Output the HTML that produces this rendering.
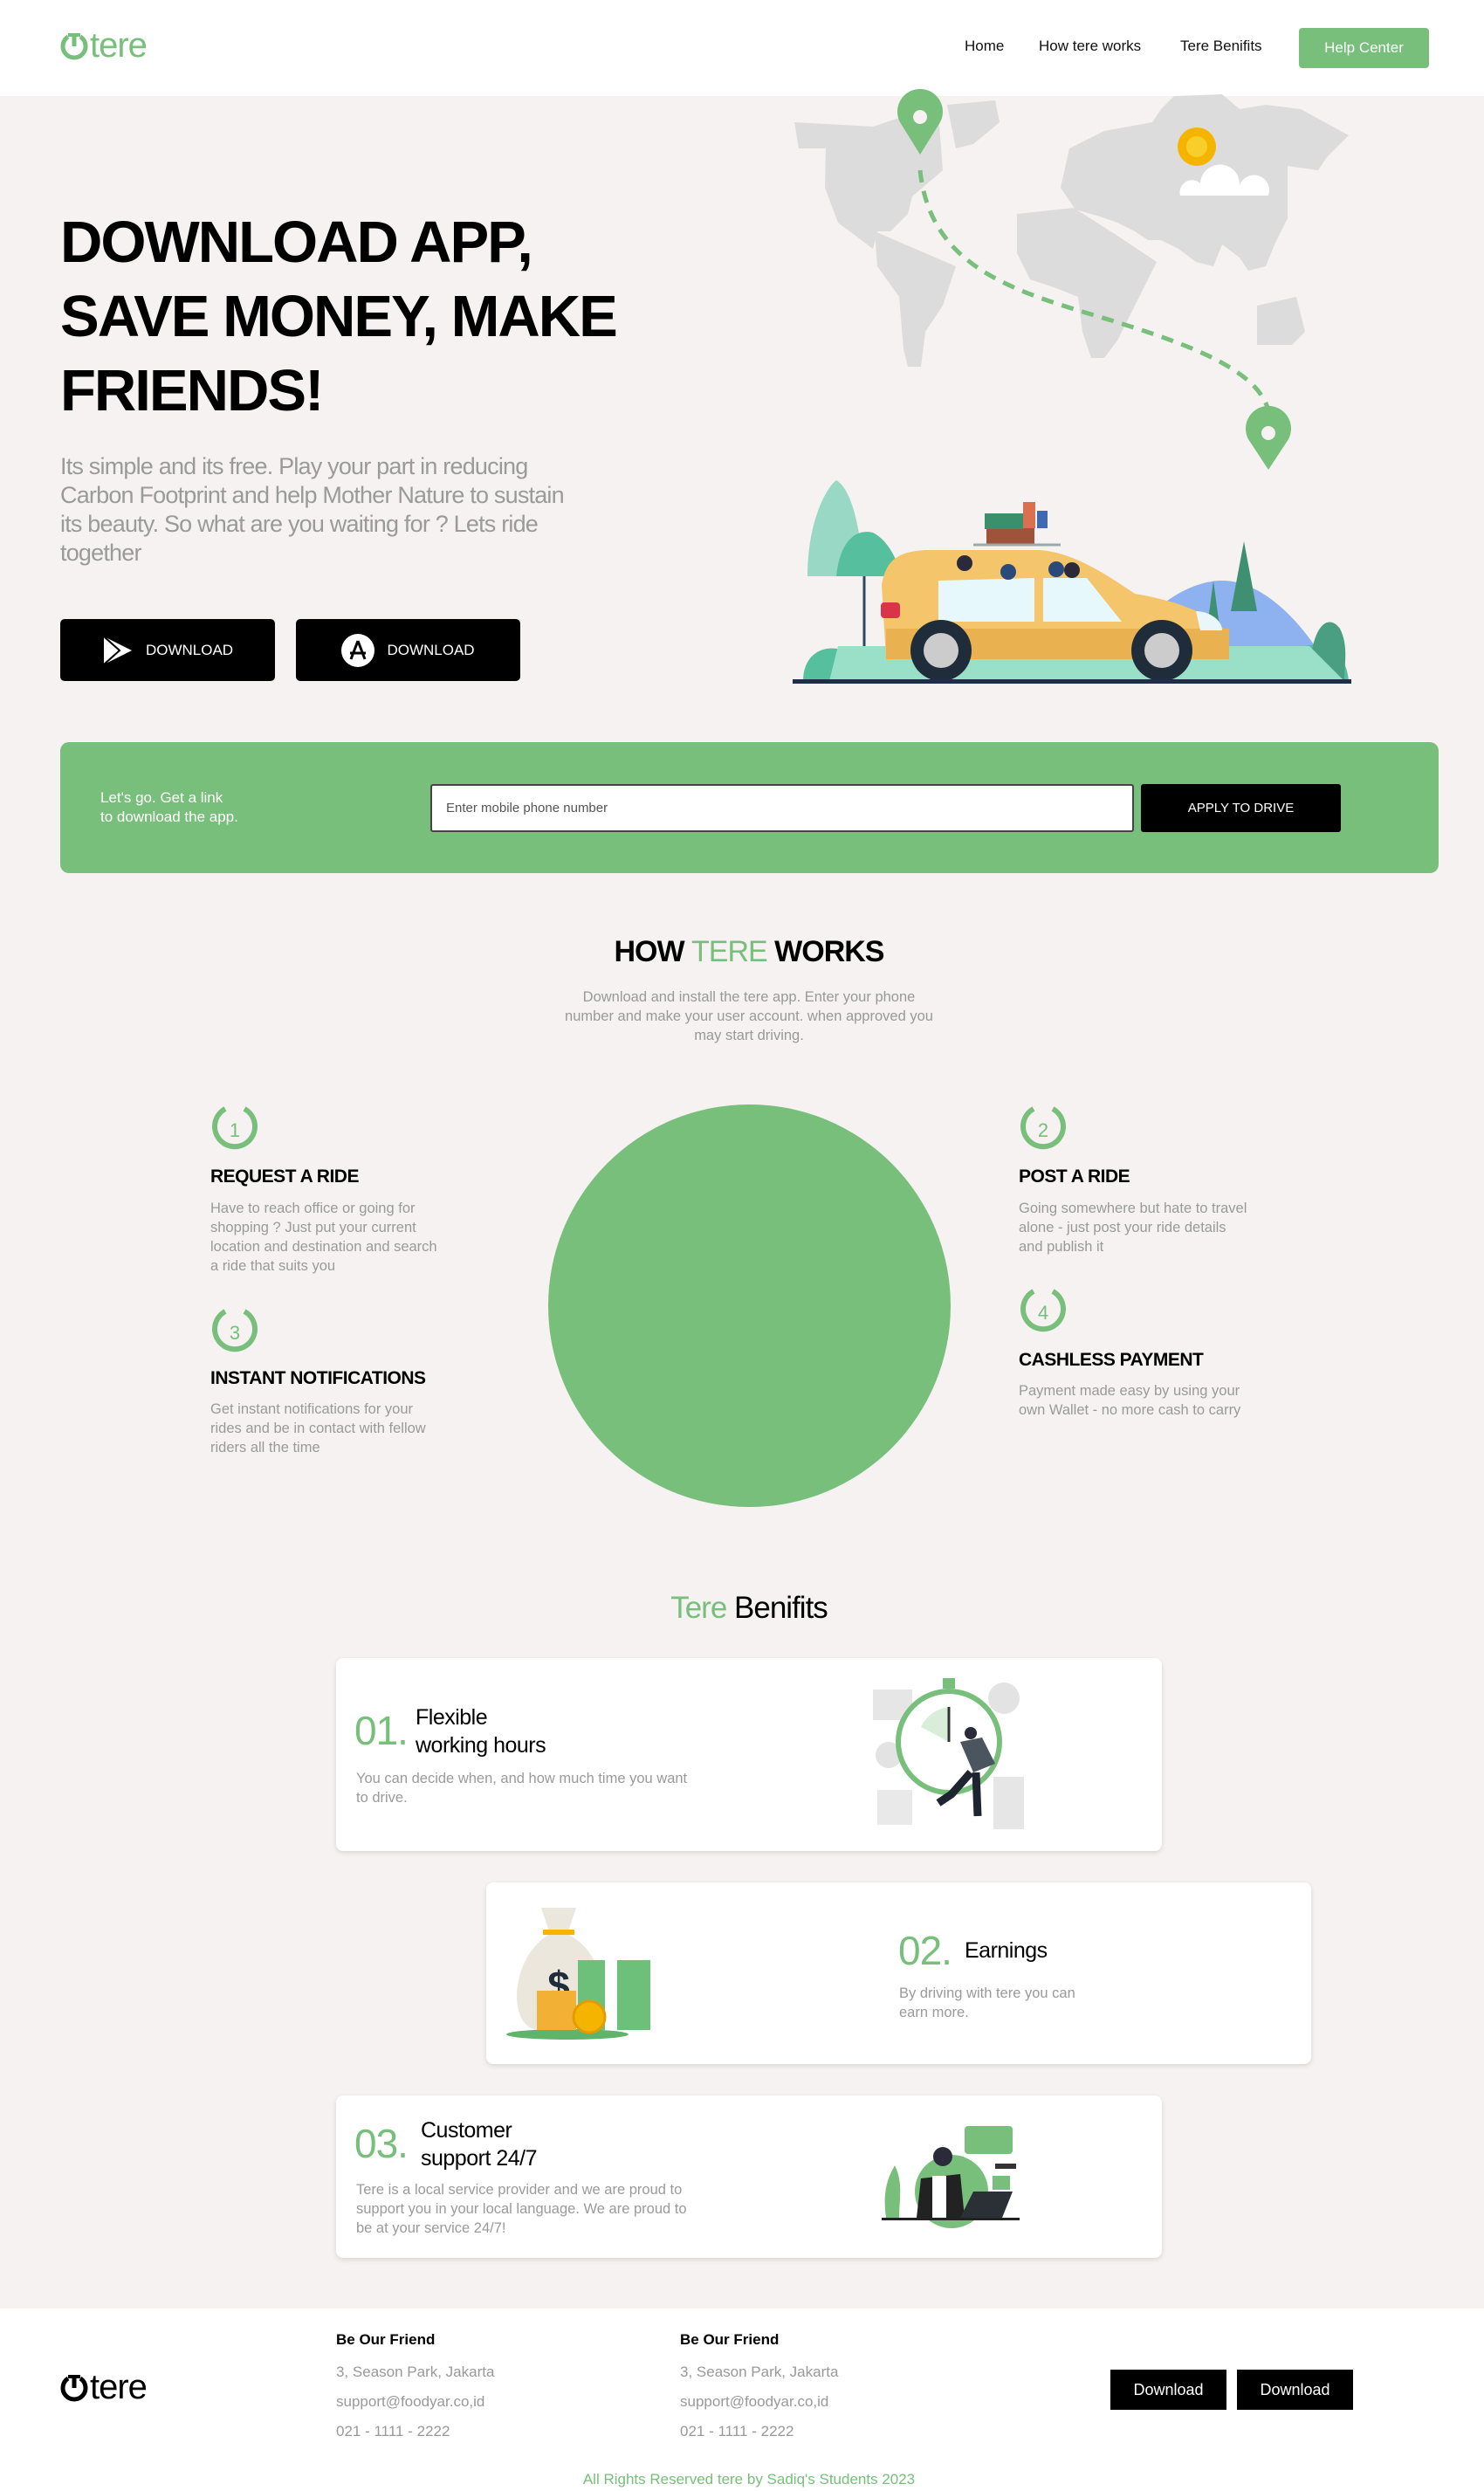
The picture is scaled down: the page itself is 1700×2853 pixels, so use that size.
<!DOCTYPE html>
<html><head><meta charset="utf-8"><style>
*{margin:0;padding:0;box-sizing:border-box}
body{width:1700px;height:2853px;background:#f5f2f1;font-family:"Liberation Sans",sans-serif;position:relative;overflow:hidden;color:#000}
.a{position:absolute}
.g{color:#77bf7a}
.nav{font-size:17px;color:#111;top:43px}
.h1{left:69px;top:235px;font-size:67px;font-weight:bold;line-height:85px;letter-spacing:-2px}
.p{left:69px;top:518px;width:760px;font-size:27px;line-height:33px;color:#9a9a9a;letter-spacing:-0.8px;white-space:nowrap}
.btn{background:#000;color:#fff;border-radius:5px;font-size:17px;display:flex;align-items:center;justify-content:center;gap:14px}
.st{font-size:21px;font-weight:bold;letter-spacing:-0.5px}
.sd{font-size:16.5px;line-height:22px;color:#9a9a9a;white-space:nowrap}
.card{background:#fff;border-radius:8px;box-shadow:0 2px 6px rgba(0,0,0,.12)}
.num{font-size:46px;color:#77bf7a;letter-spacing:-1px}
.ct{font-size:25px;line-height:32px;letter-spacing:-0.5px}
.fh{font-size:17px;font-weight:bold;top:2670px}
.fl{font-size:17px;color:#999;line-height:34px;top:2700px}
</style></head><body>
<div class="a" style="left:0;top:0;width:1700px;height:110px;background:#fff"></div>
<div class="a" style="left:68px;top:30px;font-size:40px;color:#77bf7a;letter-spacing:-1px;display:flex;align-items:center">
<svg width="34" height="36" viewBox="0 0 34 36"><path d="M10 7 A13 13 0 1 0 24 7" fill="none" stroke="#77bf7a" stroke-width="5"/><line x1="17" y1="3" x2="17" y2="18" stroke="#77bf7a" stroke-width="5"/><line x1="10" y1="5" x2="24" y2="5" stroke="#77bf7a" stroke-width="4"/></svg><span style="margin-left:1px">tere</span></div>
<div class="a nav" style="left:1105px">Home</div>
<div class="a nav" style="left:1190px">How tere works</div>
<div class="a nav" style="left:1352px">Tere Benifits</div>
<div class="a" style="left:1488px;top:32px;width:149px;height:46px;background:#77bf7a;border-radius:4px;color:#fff;font-size:17px;display:flex;align-items:center;justify-content:center">Help Center</div>

<div class="a h1">DOWNLOAD APP,<br>SAVE MONEY, MAKE<br>FRIENDS!</div>
<div class="a p">Its simple and its free. Play your part in reducing<br>Carbon Footprint and help Mother Nature to sustain<br>its beauty. So what are you waiting for ? Lets ride<br>together</div>
<div class="a btn" style="left:69px;top:709px;width:246px;height:71px"><svg width="36" height="34" viewBox="0 0 36 34"><path d="M2 1 L34 17 L2 33 Z" fill="#fff"/><path d="M2 1 L20 17 L2 33" fill="none" stroke="#000" stroke-width="2"/></svg>DOWNLOAD</div>
<div class="a btn" style="left:339px;top:709px;width:257px;height:71px"><svg width="38" height="38" viewBox="0 0 38 38"><circle cx="19" cy="19" r="19" fill="#fff"/><path d="M19 8 L11 29 M19 8 L27 29 M10 22 H28" stroke="#000" stroke-width="3" fill="none"/></svg>DOWNLOAD</div>

<svg class="a" style="left:0;top:0" width="1700" height="800" viewBox="0 0 1700 800">
<g fill="#dcdcdc">
<path d="M910 140 L1000 145 L1030 135 L1075 130 L1080 195 L1045 225 L1040 245 L1020 265 L1005 265 L1000 285 L960 255 L945 215 L946 170 L915 170Z"/>
<path d="M1002 265 L1060 290 L1095 305 L1080 350 L1060 380 L1055 420 L1040 420 L1035 400 L1030 340 L1005 305Z"/>
<path d="M1085 120 L1140 115 L1145 140 L1115 165 L1095 170Z"/>
<path d="M1225 170 L1265 150 L1320 140 L1330 125 L1345 110 L1400 108 L1420 125 L1450 120 L1490 125 L1545 155 L1520 180 L1510 195 L1475 190 L1475 250 L1460 280 L1450 305 L1430 310 L1420 295 L1400 280 L1390 305 L1370 300 L1350 285 L1330 275 L1315 275 L1300 265 L1280 255 L1260 248 L1232 240 L1215 215Z"/>
<path d="M1165 245 L1230 238 L1280 270 L1325 300 L1310 330 L1295 360 L1280 390 L1265 410 L1250 410 L1240 380 L1235 340 L1210 330 L1180 320 L1165 290Z"/>
<path d="M1440 350 L1485 340 L1495 380 L1480 395 L1440 395Z"/>
</g>
<path d="M1054 195 C1065 300 1150 330 1250 360 S1440 420 1453 470" fill="none" stroke="#77bf7a" stroke-width="5" stroke-dasharray="14 10"/>
<path d="M1054 177 L1031 140 A26 26 0 1 1 1077 140 Z" fill="#77bf7a"/><circle cx="1054" cy="134" r="8" fill="#f5f2f1"/>
<path d="M1453 538 L1430 503 A26 26 0 1 1 1476 503 Z" fill="#77bf7a"/><circle cx="1453" cy="496" r="8" fill="#f5f2f1"/>
<circle cx="1371" cy="168" r="22" fill="#f5b400"/><circle cx="1371" cy="168" r="12" fill="#f8cf2a"/>
<path d="M1352 224 A14 14 0 0 1 1375 210 A22 22 0 0 1 1420 212 A14 14 0 0 1 1453 224Z" fill="#fff"/>
<path d="M1270 780 C1300 700 1360 665 1400 665 C1450 665 1500 720 1530 780Z" fill="#8db2ef"/>
<path d="M1040 640 L1050 780 L1030 780Z" fill="#3f8f73"/><path d="M1425 620 L1440 700 L1410 700Z" fill="#3f8f73"/><path d="M1390 665 L1400 740 L1380 740Z" fill="#3f8f73"/>
<path d="M925 660 C925 600 945 560 958 550 C975 560 985 600 990 660Z" fill="#9ad8c6"/>
<path d="M958 660 C962 620 980 605 1000 610 C1020 620 1032 650 1030 660Z" fill="#56c09e"/>
<line x1="990" y1="660" x2="990" y2="780" stroke="#2b4a5c" stroke-width="3"/>
<path d="M920 780 C920 740 960 730 990 760 L1000 780Z" fill="#56c09e"/>
<path d="M1450 780 C1470 730 1540 720 1545 780Z" fill="#56c09e"/><path d="M1500 780 C1500 720 1520 700 1535 720 C1545 740 1540 760 1540 780Z" fill="#4a9e82"/>
<path d="M950 780 L1540 780 L1500 740 L960 740Z" fill="#9adfc8"/>
<path d="M1010 670 C1015 640 1030 632 1060 630 L1190 630 C1230 632 1270 660 1300 680 C1360 690 1400 710 1408 730 L1408 755 L1015 755 Z" fill="#f4c56a"/>
<path d="M1015 720 L1408 720 L1408 755 L1015 755Z" fill="#eab150"/>
<path d="M1075 665 L1185 662 L1185 712 L1075 712Z" fill="#e6f8fb"/><path d="M1195 662 L1245 662 L1285 712 L1195 712Z" fill="#e6f8fb"/>
<circle cx="1105" cy="645" r="9" fill="#2a2a3a"/><circle cx="1155" cy="655" r="9" fill="#2a4a7a"/><circle cx="1210" cy="652" r="9" fill="#2a4a7a"/><circle cx="1228" cy="653" r="9" fill="#2a2a3a"/>
<rect x="1130" y="605" width="55" height="18" fill="#a0533b"/><rect x="1128" y="588" width="45" height="18" fill="#3c8f6b"/><rect x="1172" y="575" width="14" height="30" fill="#d97050"/><rect x="1188" y="585" width="12" height="20" fill="#3d6ab0"/>
<line x1="1115" y1="624" x2="1215" y2="624" stroke="#9aa" stroke-width="3"/>
<rect x="1009" y="690" width="22" height="18" rx="4" fill="#d9344a"/>
<path d="M1370 700 C1385 700 1400 710 1400 722 L1375 722Z" fill="#e9f7fb"/>
<circle cx="1078" cy="745" r="35" fill="#1f2d3a"/><circle cx="1078" cy="745" r="20" fill="#ccc"/>
<circle cx="1331" cy="745" r="35" fill="#1f2d3a"/><circle cx="1331" cy="745" r="20" fill="#ccc"/>
<rect x="908" y="778" width="640" height="5" fill="#1f2d4a"/>
</svg>

<div class="a" style="left:69px;top:850px;width:1579px;height:150px;background:#77bf7a;border-radius:10px"></div>
<div class="a" style="left:115px;top:903px;color:#fff;font-size:17px;line-height:22px">Let's go. Get a link<br>to download the app.</div>
<div class="a" style="left:493px;top:898px;width:806px;height:55px;background:#fff;border:2px solid #444;border-radius:3px;font-size:15px;color:#555;padding:17px 16px">Enter mobile phone number</div>
<div class="a" style="left:1307px;top:898px;width:229px;height:55px;background:#000;border-radius:3px;color:#fff;font-size:15px;display:flex;align-items:center;justify-content:center">APPLY TO DRIVE</div>

<div class="a" style="left:0;width:1716px;top:1071px;text-align:center;font-size:34px;font-weight:bold;letter-spacing:-1px">HOW <span class="g" style="font-weight:normal">TERE</span> WORKS</div>
<div class="a" style="left:558px;width:600px;top:1131px;text-align:center;font-size:16.5px;line-height:22px;color:#999">Download and install the tere app. Enter your phone<br>number and make your user account. when approved you<br>may start driving.</div>
<div class="a" style="left:628px;top:1265px;width:461px;height:461px;border-radius:50%;background:#77bf7a"></div>

<svg width="0" height="0" style="position:absolute"><defs><g id="ic"><path d="M17 5 A23 23 0 1 0 39 5" fill="none" stroke="#77bf7a" stroke-width="6"/></g></defs></svg>
<svg class="a" style="left:241px;top:1265px" width="56" height="56"><use href="#ic"/><text x="28" y="37" text-anchor="middle" font-size="22" fill="#77bf7a" font-family="Liberation Sans">1</text></svg>
<div class="a st" style="left:241px;top:1336px">REQUEST A RIDE</div>
<div class="a sd" style="left:241px;top:1373px">Have to reach office or going for<br>shopping ? Just put your current<br>location and destination and search<br>a ride that suits you</div>
<svg class="a" style="left:241px;top:1497px" width="56" height="56"><use href="#ic"/><text x="28" y="37" text-anchor="middle" font-size="22" fill="#77bf7a" font-family="Liberation Sans">3</text></svg>
<div class="a st" style="left:241px;top:1567px">INSTANT NOTIFICATIONS</div>
<div class="a sd" style="left:241px;top:1603px">Get instant notifications for your<br>rides and be in contact with fellow<br>riders all the time</div>
<svg class="a" style="left:1167px;top:1265px" width="56" height="56"><use href="#ic"/><text x="28" y="37" text-anchor="middle" font-size="22" fill="#77bf7a" font-family="Liberation Sans">2</text></svg>
<div class="a st" style="left:1167px;top:1336px">POST A RIDE</div>
<div class="a sd" style="left:1167px;top:1373px">Going somewhere but hate to travel<br>alone - just post your ride details<br>and publish it</div>
<svg class="a" style="left:1167px;top:1474px" width="56" height="56"><use href="#ic"/><text x="28" y="37" text-anchor="middle" font-size="22" fill="#77bf7a" font-family="Liberation Sans">4</text></svg>
<div class="a st" style="left:1167px;top:1546px">CASHLESS PAYMENT</div>
<div class="a sd" style="left:1167px;top:1582px">Payment made easy by using your<br>own Wallet - no more cash to carry</div>

<div class="a" style="left:0;width:1716px;top:1822px;text-align:center;font-size:35px;letter-spacing:-1px"><span class="g">Tere</span> Benifits</div>

<div class="a card" style="left:385px;top:1899px;width:946px;height:221px"></div>
<div class="a num" style="left:406px;top:1955px">01.</div>
<div class="a ct" style="left:476px;top:1951px">Flexible<br>working hours</div>
<div class="a sd" style="left:408px;top:2026px">You can decide when, and how much time you want<br>to drive.</div>
<svg class="a" style="left:990px;top:1910px" width="200" height="200" viewBox="990 1910 200 200">
<rect x="1000" y="1935" width="45" height="35" fill="#e6e6e6"/><circle cx="1150" cy="1945" r="18" fill="#e3e3e3"/><circle cx="1018" cy="2010" r="15" fill="#e3e3e3"/>
<rect x="1138" y="2035" width="35" height="60" fill="#e6e6e6"/><rect x="1005" y="2050" width="40" height="40" fill="#e9e9e9"/>
<rect x="1080" y="1922" width="14" height="12" fill="#77bf7a"/>
<circle cx="1087" cy="1995" r="58" fill="#fff" stroke="#77bf7a" stroke-width="6"/>
<path d="M1087 1995 L1087 1955 A40 40 0 0 0 1055 1978Z" fill="#d8eed8"/><line x1="1087" y1="1995" x2="1087" y2="1955" stroke="#333" stroke-width="3"/>
<circle cx="1112" cy="1985" r="7" fill="#2a2a3a"/><path d="M1100 1995 L1125 1990 L1140 2020 L1115 2030Z" fill="#4a5560"/>
<path d="M1112 2030 L1090 2055 L1075 2065 M1118 2030 L1120 2080" stroke="#1f2530" stroke-width="9" fill="none"/>
</svg>

<div class="a card" style="left:557px;top:2156px;width:945px;height:208px"></div>
<svg class="a" style="left:570px;top:2170px" width="200" height="180" viewBox="570 2170 200 180">
<ellipse cx="650" cy="2330" rx="70" ry="6" fill="#5fb46a"/>
<path d="M620 2185 L660 2185 L650 2215 C700 2240 705 2320 650 2325 L615 2325 C580 2320 585 2240 630 2215Z" fill="#ece7dc"/>
<rect x="622" y="2210" width="36" height="6" fill="#f4b400"/>
<text x="640" y="2290" font-size="46" font-weight="bold" fill="#1f2d3a" text-anchor="middle" font-family="Liberation Sans">$</text>
<rect x="662" y="2245" width="83" height="80" fill="#6cc07a"/><rect x="693" y="2245" width="14" height="80" fill="#fff"/>
<rect x="615" y="2280" width="45" height="45" fill="#f2b134"/><circle cx="675" cy="2310" r="18" fill="#f4b400" stroke="#e39c00" stroke-width="3"/>
</svg>
<div class="a num" style="left:1029px;top:2207px">02.</div>
<div class="a ct" style="left:1105px;top:2218px">Earnings</div>
<div class="a sd" style="left:1030px;top:2272px">By driving with tere you can<br>earn more.</div>

<div class="a card" style="left:385px;top:2400px;width:946px;height:186px"></div>
<div class="a num" style="left:406px;top:2428px">03.</div>
<div class="a ct" style="left:482px;top:2424px">Customer<br>support 24/7</div>
<div class="a sd" style="left:408px;top:2497px">Tere is a local service provider and we are proud to<br>support you in your local language. We are proud to<br>be at your service 24/7!</div>
<svg class="a" style="left:1000px;top:2420px" width="180" height="140" viewBox="1000 2420 180 140">
<circle cx="1090" cy="2510" r="42" fill="#77bf7a"/>
<rect x="1105" y="2435" width="55" height="32" rx="4" fill="#77bf7a"/><rect x="1137" y="2492" width="20" height="16" fill="#77bf7a"/><rect x="1140" y="2478" width="24" height="6" fill="#333"/>
<path d="M1015 2540 C1010 2505 1020 2490 1025 2480 C1035 2500 1030 2520 1030 2540Z" fill="#77bf7a"/>
<circle cx="1080" cy="2470" r="11" fill="#2a2a3a"/><path d="M1050 2540 L1055 2495 L1100 2490 L1105 2540Z" fill="#222"/><rect x="1068" y="2492" width="16" height="48" fill="#fff"/>
<path d="M1100 2540 L1115 2510 L1160 2510 L1148 2540Z" fill="#2b2f36"/>
<rect x="1010" y="2540" width="158" height="3" fill="#222"/>
</svg>

<div class="a" style="left:0;top:2644px;width:1700px;height:209px;background:#fff"></div>
<div class="a" style="left:68px;top:2712px;font-size:40px;letter-spacing:-1px;display:flex;align-items:center">
<svg width="34" height="36" viewBox="0 0 34 36"><path d="M10 7 A13 13 0 1 0 24 7" fill="none" stroke="#000" stroke-width="5"/><line x1="17" y1="3" x2="17" y2="18" stroke="#000" stroke-width="5"/><line x1="10" y1="5" x2="24" y2="5" stroke="#000" stroke-width="4"/></svg><span style="margin-left:1px">tere</span></div>
<div class="a fh" style="left:385px">Be Our Friend</div>
<div class="a fl" style="left:385px">3, Season Park, Jakarta<br>support@foodyar.co,id<br>021 - 1111 - 2222</div>
<div class="a fh" style="left:779px">Be Our Friend</div>
<div class="a fl" style="left:779px">3, Season Park, Jakarta<br>support@foodyar.co,id<br>021 - 1111 - 2222</div>
<div class="a" style="left:1272px;top:2714px;width:133px;height:46px;background:#000;color:#fff;font-size:18px;display:flex;align-items:center;justify-content:center">Download</div>
<div class="a" style="left:1417px;top:2714px;width:133px;height:46px;background:#000;color:#fff;font-size:18px;display:flex;align-items:center;justify-content:center">Download</div>
<div class="a g" style="left:0;width:1716px;top:2830px;text-align:center;font-size:17px">All Rights Reserved tere by Sadiq's Students 2023</div>
</body></html>
